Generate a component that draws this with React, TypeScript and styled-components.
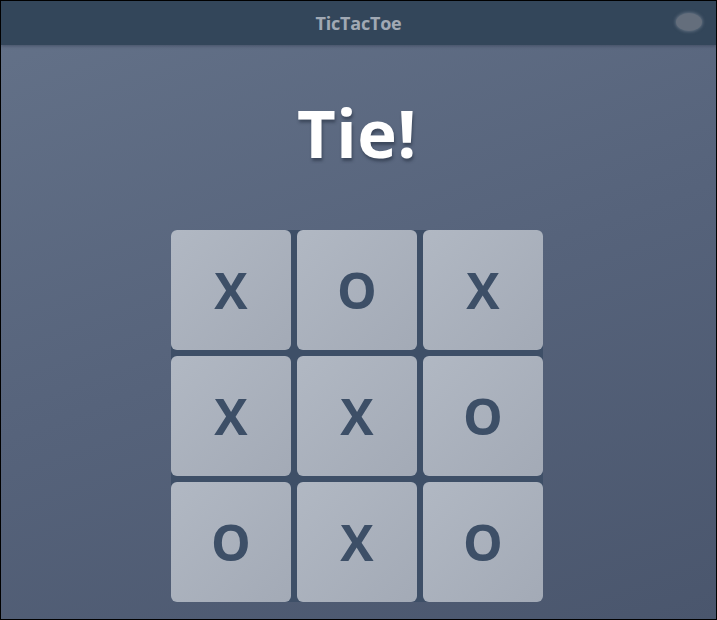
import React from "react";
import styled, { createGlobalStyle } from "styled-components";

const Global = createGlobalStyle`
  html, body { margin: 0; padding: 0; background: #000; }
  body { font-family: "Open Sans", "Noto Sans", sans-serif; }
`;

const Frame = styled.div`
  width: 717px;
  height: 620px;
  box-sizing: border-box;
  border: 1px solid #000;
  display: flex;
  flex-direction: column;
  background: linear-gradient(160deg, #647289 0%, #56637b 50%, #4a566d 100%);
  overflow: hidden;
`;

const Header = styled.header`
  height: 44px;
  flex: none;
  background: #33465a;
  display: flex;
  align-items: center;
  justify-content: center;
  position: relative;
  box-shadow: 0 1px 3px rgba(20, 30, 45, 0.35);
`;

const Title = styled.h1`
  margin: 0;
  font-size: 18px;
  font-weight: 700;
  color: #a1a9b4;
  letter-spacing: -0.2px;
`;

const Toggle = styled.span`
  position: absolute;
  right: 14px;
  top: 12px;
  width: 26px;
  height: 18px;
  border-radius: 50%;
  background: #646e7c;
  box-shadow: 0 0 3px 1px rgba(110, 122, 138, 0.7);
`;

const Main = styled.main`
  flex: 1;
  display: flex;
  flex-direction: column;
  align-items: center;
  padding-right: 3px;
`;

const Status = styled.h2`
  margin: 40px 0 0;
  height: 94px;
  line-height: 94px;
  font-size: 67px;
  font-weight: 700;
  color: #ffffff;
  text-shadow: 1px 3px 3px rgba(30, 40, 55, 0.5);
  letter-spacing: 0.5px;
`;

const Board = styled.div`
  margin-top: 51px;
  display: grid;
  grid-template-columns: repeat(3, 120px);
  grid-auto-rows: 120px;
  gap: 6px;
  background: #3e4f67;
  border-radius: 6px;
`;

const Cell = styled.button`
  border: none;
  padding: 0;
  border-radius: 6px;
  background: linear-gradient(135deg, #b1b8c3 0%, #a3aab6 100%);
  color: #3d4f67;
  font-family: "Open Sans", "Noto Sans", sans-serif;
  font-weight: 700;
  font-size: 50px;
  line-height: 1;
  display: flex;
  align-items: center;
  justify-content: center;
  cursor: pointer;
`;

const cells = ["X", "O", "X", "X", "X", "O", "O", "X", "O"];

export default function App() {
  return (
    <>
      <Global />
      <Frame>
        <Header>
          <Title>TicTacToe</Title>
          <Toggle />
        </Header>
        <Main>
          <Status>Tie!</Status>
          <Board>
            {cells.map((c, i) => (
              <Cell key={i}>{c}</Cell>
            ))}
          </Board>
        </Main>
      </Frame>
    </>
  );
}
